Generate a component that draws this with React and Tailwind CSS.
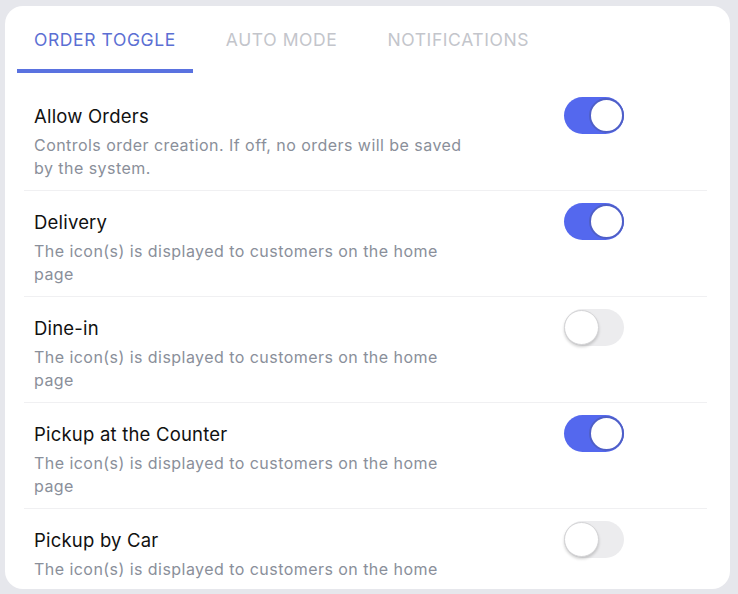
import React, { useState } from "react";

const tabs = ["Order Toggle", "Auto Mode", "Notifications"];

const initialRows = [
  {
    title: "Allow Orders",
    desc: "Controls order creation. If off, no orders will be saved by the system.",
    on: true,
  },
  { title: "Delivery", desc: "The icon(s) is displayed to customers on the home page", on: true },
  { title: "Dine-in", desc: "The icon(s) is displayed to customers on the home page", on: false },
  { title: "Pickup at the Counter", desc: "The icon(s) is displayed to customers on the home page", on: true },
  { title: "Pickup by Car", desc: "The icon(s) is displayed to customers on the home page", on: false },
];

const Toggle = ({ on, onClick }) => (
  <button
    onClick={onClick}
    className={`relative w-[60px] h-[37px] rounded-full shrink-0 ${
      on ? "bg-[#5468ee]" : "bg-[#ececee]"
    }`}
  >
    <span
      className={`absolute top-[1px] w-[35px] h-[35px] rounded-full bg-white ${
        on
          ? "right-0 border-[2px] border-[#4f5fc7]"
          : "left-0 border border-[#d4d4d6] shadow-[0_2px_3px_rgba(0,0,0,0.18)]"
      }`}
    ></span>
  </button>
);

export default function App() {
  const [active, setActive] = useState(0);
  const [rows, setRows] = useState(initialRows);

  const flip = (i) => {
    setRows(rows.map((r, j) => (j === i ? { ...r, on: !r.on } : r)));
  };

  return (
    <div
      className="w-[738px] h-[594px] bg-[#e6e7ec] pt-[6px] pl-[5px] overflow-hidden"
      style={{ fontFamily: "Inter, 'Noto Sans', sans-serif" }}
    >
      <div className="w-[725px] h-[583px] bg-white rounded-[18px] overflow-hidden">
        {/* Tabs */}
        <div className="flex gap-4 pl-[12px]">
          {tabs.map((t, i) => (
            <button
              key={t}
              onClick={() => setActive(i)}
              className={`h-[67px] px-[17px] pt-[22px] border-b-4 uppercase text-[17.5px] leading-[24px] tracking-[0.6px] self-start flex justify-center whitespace-nowrap ${
                i === active
                  ? "border-[#5a72e0] text-[#5b6fd3]"
                  : "border-transparent text-[#c3c5cb]"
              }`}
            >
              {t}
            </button>
          ))}
        </div>

        {/* Rows */}
        <div className="mt-[12px] mx-[19px] mr-[23px]">
          {rows.map((r, i) => (
            <div
              key={r.title}
              className="flex justify-between items-start h-[106px] pt-[18px] pl-[10px] pr-[83px] border-b border-[#f0f0f2]"
            >
              <div className="w-[432px]">
                <div className="text-[18.5px] leading-[26px] text-[#111111] tracking-[0.2px]">{r.title}</div>
                <div className="mt-[5px] text-[16px] leading-[23px] text-[#8a8f9a] tracking-[0.45px]">{r.desc}</div>
              </div>
              <div className="mt-[-6px]">
                <Toggle on={r.on} onClick={() => flip(i)} />
              </div>
            </div>
          ))}
        </div>
      </div>
    </div>
  );
}
